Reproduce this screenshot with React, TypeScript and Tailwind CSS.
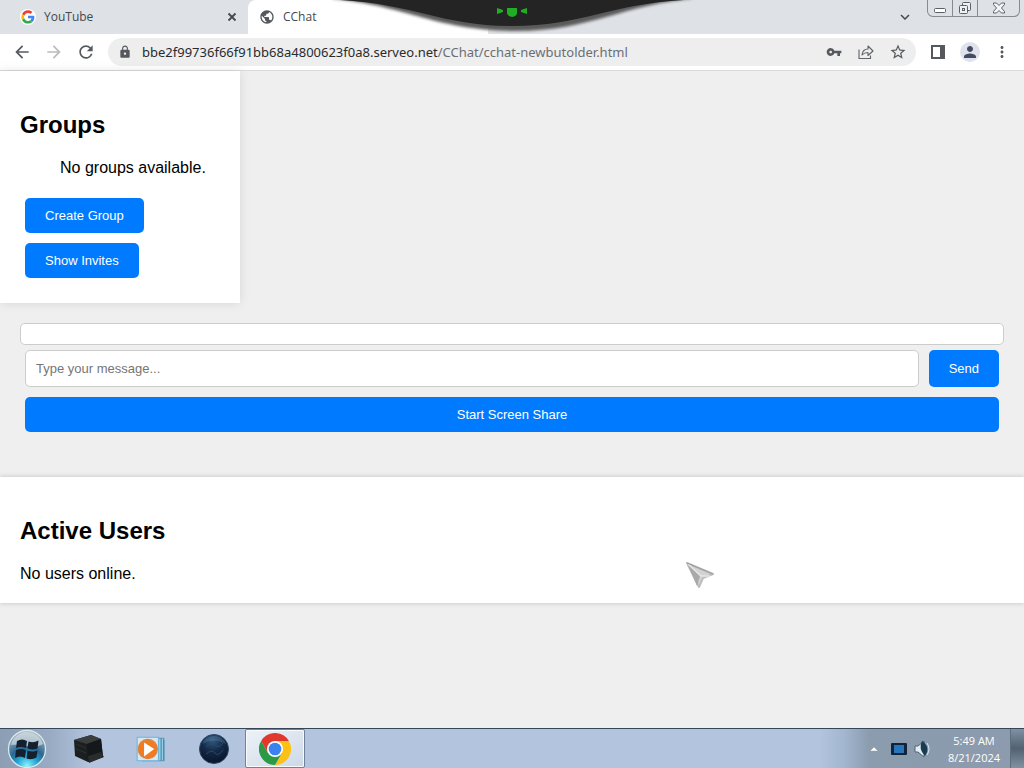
import type { ReactNode } from 'react';
import { MdArrowBack, MdArrowForward, MdRefresh, MdLock, MdVpnKey, MdStarBorder, MdPerson, MdMoreVert, MdKeyboardArrowDown, MdPublic } from 'react-icons/md';

function GoogleLogo() {
  return (
    <svg viewBox="0 0 48 48" className="size-4" aria-hidden="true">
      <circle cx="24" cy="24" r="24" fill="#fff" />
      <g transform="translate(4 4) scale(.83)">
        <path fill="#EA4335" d="M24 9.5c3.54 0 6.71 1.22 9.21 3.6l6.85-6.85C35.9 2.38 30.47 0 24 0 14.62 0 6.51 5.38 2.56 13.22l7.98 6.19C12.43 13.72 17.74 9.5 24 9.5z" />
        <path fill="#4285F4" d="M46.98 24.55c0-1.57-.15-3.09-.38-4.55H24v9.02h12.94c-.58 2.96-2.26 5.48-4.78 7.18l7.73 6c4.51-4.18 7.09-10.36 7.09-17.65z" />
        <path fill="#FBBC05" d="M10.53 28.59c-.48-1.45-.76-2.99-.76-4.59s.27-3.14.76-4.59l-7.98-6.19C.92 16.46 0 20.12 0 24c0 3.88.92 7.54 2.56 10.78l7.97-6.19z" />
        <path fill="#34A853" d="M24 48c6.48 0 11.93-2.13 15.89-5.81l-7.73-6c-2.15 1.45-4.92 2.3-8.16 2.3-6.26 0-11.57-4.22-13.47-9.91l-7.98 6.19C6.51 42.62 14.62 48 24 48z" />
      </g>
    </svg>
  );
}

function ChromeLogo() {
  return (
    <svg viewBox="0 0 48 48" className="size-8" aria-hidden="true">
      <path fill="#e0382c" d="M24 24 3.2 12A24 24 0 0 1 44.8 12z" />
      <path fill="#fbc116" d="M24 24V12h20.8A24 24 0 0 1 24 48l10.4-18z" />
      <path fill="#2b9a45" d="M24 24 13.6 30 3.2 12A24 24 0 0 0 24 48l10.4-18z" />
      <path fill="#e0382c" d="M3.2 12 13.6 30 24 24V12z" />
      <circle cx="24" cy="24" r="12" fill="#fff" />
      <circle cx="24" cy="24" r="9.5" fill="#3b82ee" />
    </svg>
  );
}

function StartOrb() {
  return (
    <svg viewBox="0 0 40 40" className="size-10" aria-hidden="true">
      <defs>
        <radialGradient id="orb" cx=".5" cy=".95" r=".9">
          <stop offset="0" stopColor="#8cf5f8" />
          <stop offset=".3" stopColor="#25a5d9" />
          <stop offset=".55" stopColor="#2a6791" />
          <stop offset="1" stopColor="#a9b6c0" />
        </radialGradient>
      </defs>
      <circle cx="20" cy="20" r="18.5" fill="url(#orb)" stroke="#d5eaed" strokeWidth="1.3" />
      <path d="M4 16a16.5 16.5 0 0 1 32-1c-10 6-22-1-32 1z" fill="#dbe4e8" opacity=".65" />
      <g fill="#14202d">
        <path d="M10 12q5-3 10 0l-1 7q-5-2-10 0z" />
        <path d="M21.500 12.500q5 2 10-1l-1 8q-5 2-10 0z" />
        <path d="M9 21q5-2 10 0l-1 8q-5-3-10 0z" />
        <path d="M20.500 21.500q5 2 10 0l-1 7q-5 3-10 1z" />
      </g>
    </svg>
  );
}

function BoxIcon() {
  return (
    <svg viewBox="0 0 32 30" className="h-8 w-8" aria-hidden="true">
      <path d="M1 6 18 1l10 4 2 18-15 5L2 22z" fill="#1c1f20" />
      <path d="M1 6 18 1l10 4-14 5z" fill="#3b3e3e" />
      <path d="m14 10 14-5 2 18-15 5z" fill="#15181a" />
      <path d="m3 10 10 4m-10 1 10 4" stroke="#2c3031" />
      <path d="m15 22 13-4 3 5-15 6z" fill="#292c2d" />
    </svg>
  );
}

function MediaIcon() {
  return (
    <svg viewBox="0 0 30 26" className="h-7 w-8" aria-hidden="true">
      <path d="M7 3h20v21H7z" fill="#9acbe5" stroke="#6697b4" />
      <path d="M24.500 3v21m2.500-20v20" stroke="#2f8db0" />
      <path d="M2 2h20v22H2z" fill="#d8e6ee" stroke="#72b3dc" />
      <circle cx="12" cy="13" r="9" fill="#ef7c20" stroke="#d8833c" />
      <path d="m8.500 7 9.500 6-9.500 7z" fill="#fff" />
    </svg>
  );
}

function GlobeIcon() {
  return (
    <svg viewBox="0 0 32 32" className="size-8" aria-hidden="true">
      <defs>
        <radialGradient id="planet" cx=".45" cy=".2" r=".85">
          <stop offset="0" stopColor="#315a80" />
          <stop offset=".45" stopColor="#142a48" />
          <stop offset="1" stopColor="#071225" />
        </radialGradient>
      </defs>
      <circle cx="16" cy="16" r="14.500" fill="url(#planet)" stroke="#29496b" />
      <path d="M8 14q5-6 9-2t8-2M8 21q6-5 9-1t8-3" fill="none" stroke="#2c4866" strokeWidth="1" />
      <path d="M4 11a13 13 0 0 1 24 0q-12-7-24 0z" fill="#6790b3" opacity=".3" />
    </svg>
  );
}

function ShareIcon() {
  return (
    <svg viewBox="0 0 16 16" className="size-4" fill="none" stroke="#5f6368" strokeWidth="1.100" aria-hidden="true">
      <path d="M1 5.500V14.500h11.500v-3" />
      <path d="M4 11c.5-4 2.500-6 6-6V2l5 5-5 4.500V8.500c-3 0-4.500.8-6 2.500z" strokeLinejoin="round" />
    </svg>
  );
}

function TopDrawer() {
  return (
    <svg viewBox="0 0 360 36" className="pointer-events-none absolute left-1/2 top-0 h-9 w-90 -translate-x-1/2" aria-hidden="true">
      <defs>
        <filter id="soft" x="-5%" y="-20%" width="110%" height="150%">
          <feGaussianBlur stdDeviation="1.800" />
        </filter>
        <clipPath id="strip"><path d="M0 0h360v34H0z" /></clipPath>
      </defs>
      <g clipPath="url(#strip)">
        <path d="M-10-2C70 3 100 30 180 31S290 3 370-2z" fill="#5a5a5a" filter="url(#soft)" />
        <path d="M8 0C82 4 110 26 180 26S278 4 352 0z" fill="#242424" />
      </g>
      <path d="M165 8l6 2v2l-6 2zm30 0-6 2v2l6 2zM175 8h10v5q0 3-5 4-5-1-5-4z" fill="#20ae25" />
    </svg>
  );
}

function IconButton({ label, children, className = '' }: { label: string; children: ReactNode; className?: string }) {
  return (
    <button type="button" aria-label={label} className={`flex shrink-0 items-center justify-center ${className}`}>
      {children}
    </button>
  );
}

function TabStrip() {
  return (
    <header className="relative flex h-[34px] bg-[#dee2e6] text-xs text-[#45494d]">
      <div className="flex w-62 items-center gap-2 rounded-br-lg pl-5 pr-2">
        <GoogleLogo />
        <span className="flex-1">YouTube</span>
        <IconButton label="Close tab" className="size-4">
          <svg viewBox="0 0 16 16" className="size-4" aria-hidden="true"><path d="m4.500 4.500 7 7m0-7-7 7" stroke="currentColor" strokeWidth="1.800" /></svg>
        </IconButton>
      </div>
      <div className="flex w-60 items-center gap-2 rounded-t-lg bg-white pl-[11px]">
        <MdPublic size={16} color="#54585c" />
        <span>CChat</span>
      </div>
      <div className="flex flex-1 items-start justify-end pr-1">
        <IconButton label="Search tabs" className="mr-3 mt-[7px] size-5"><MdKeyboardArrowDown size={18} stroke="currentColor" strokeWidth={0} /></IconButton>
        <div className="flex h-[17px] rounded-b-md border border-t-0 border-[#858b90] text-[#5b6064]">
          <IconButton label="Minimize" className="w-6">
            <svg viewBox="0 0 14 12" className="h-3 w-3.5" fill="#fff" stroke="currentColor" aria-hidden="true"><rect x="1.500" y="6.500" width="11" height="4" rx="1" /></svg>
          </IconButton>
          <IconButton label="Restore" className="w-[26px] border-x border-[#858b90]">
            <svg viewBox="0 0 14 14" className="size-3.5" fill="#eef0f2" stroke="currentColor" aria-hidden="true"><rect x="4.500" y="1.500" width="8" height="8" rx="1" /><rect x="1.500" y="4.500" width="8" height="8" rx="1" /><rect x="4.500" y="7.500" width="2" height="2" /></svg>
          </IconButton>
          <IconButton label="Close" className="w-[41px]">
            <svg viewBox="0 0 14 14" className="size-3.5" fill="#f5f6f7" stroke="currentColor" aria-hidden="true"><path d="M1.500 2h3L7 4.500 9.500 2h3v1.500L9.500 7l3 3.500V12h-3L7 9.500 4.500 12h-3v-1.500l3-3.500-3-3.500z" /></svg>
          </IconButton>
        </div>
      </div>
      <TopDrawer />
    </header>
  );
}

function AddressBar() {
  return (
    <div className="flex h-[37px] items-center border-b border-[#d9dadb] bg-white pl-3 pr-3 text-[#55595d]">
      <nav className="flex gap-3" aria-label="History">
        <IconButton label="Back" className="size-5"><MdArrowBack size={20} /></IconButton>
        <IconButton label="Forward" className="size-5 text-[#babcbe]"><MdArrowForward size={20} /></IconButton>
        <IconButton label="Reload" className="size-5"><MdRefresh size={20} /></IconButton>
      </nav>
      <div className="ml-3 flex h-7 min-w-0 flex-1 items-center rounded-full bg-[#eeeeee] pl-2.5 pr-2.5">
        <MdLock size={14} className="shrink-0" />
        <div role="textbox" aria-label="Address" tabIndex={0} className="ml-2.5 min-w-0 flex-1 truncate font-['Noto_Sans','Open_Sans',sans-serif] text-[13px] leading-5 text-[#6b6f73]">
          <span className="text-[#292b2e]">bbe2f99736f66f91bb68a4800623f0a8.serveo.net</span>/CChat/cchat-newbutolder.html
        </div>
        <div className="flex gap-4">
          <IconButton label="Passwords" className="size-4"><MdVpnKey size={16} /></IconButton>
          <IconButton label="Share" className="size-4"><ShareIcon /></IconButton>
          <IconButton label="Bookmark" className="size-4"><MdStarBorder size={18} className="shrink-0" /></IconButton>
        </div>
      </div>
      <div className="ml-3 flex items-center gap-3">
        <IconButton label="Side panel" className="size-5">
          <svg viewBox="0 0 16 16" className="size-4" aria-hidden="true"><path fill="currentColor" d="M1 1h14v14H1zm2 2v10h7V3z" fillRule="evenodd" /></svg>
        </IconButton>
        <IconButton label="Profile" className="size-5 rounded-full bg-[#dfe2ec] text-[#444b61]"><MdPerson size={18} /></IconButton>
        <IconButton label="Menu" className="size-5"><MdMoreVert size={18} /></IconButton>
      </div>
    </div>
  );
}

function BlueButton({ children, className = '' }: { children: ReactNode; className?: string }) {
  return (
    <button type="button" className={`rounded-[5px] bg-[#007bff] px-5 py-2.5 text-[13px] leading-[15px] text-white ${className}`}>
      {children}
    </button>
  );
}

function ChatPage() {
  return (
    <main className="relative flex-1 bg-[#efefef] font-['Liberation_Sans',Arial,sans-serif] text-base leading-[18px] text-black">
      <aside className="w-60 bg-white p-5 shadow-[0_0_10px_rgba(0,0,0,0.1)]">
        <h2 className="my-5 text-2xl font-bold leading-7">Groups</h2>
        <p className="mb-4 pl-10">No groups available.</p>
        <div className="flex flex-col items-start gap-2.5 p-[5px]">
          <BlueButton>Create Group</BlueButton>
          <BlueButton>Show Invites</BlueButton>
        </div>
      </aside>
      <section className="p-5" aria-label="Chat">
        <div className="h-[22px] rounded-[5px] border border-[#cccccc] bg-white" role="log" />
        <form className="flex gap-2.5 p-[5px]" onSubmit={(e) => e.preventDefault()}>
          <input aria-label="Message" placeholder="Type your message..." className="h-[37px] min-w-0 flex-1 rounded-[5px] border border-[#cccccc] bg-white px-2.5 text-[13px] placeholder:text-[#757575]" />
          <BlueButton>Send</BlueButton>
        </form>
        <div className="flex p-[5px]"><BlueButton className="flex-1">Start Screen Share</BlueButton></div>
      </section>
      <section className="mt-5 bg-white p-5 shadow-[0_0_5px_rgba(0,0,0,0.2)]">
        <h2 className="my-5 text-2xl font-bold leading-7">Active Users</h2>
        <p>No users online.</p>
      </section>
      <svg viewBox="0 0 30 28" className="pointer-events-none absolute left-[685px] top-[490px] h-7 w-[30px]" aria-hidden="true">
        <path d="M2 2 28 13 18 17l-4 9z" fill="#d2d2d2" stroke="#bdbdbd" strokeWidth="2" strokeLinejoin="round" />
        <path d="m2 2 10 23 3-10z" fill="#a9a9a9" />
        <path d="m3 3 13 12h9" fill="none" stroke="#e6e6e6" strokeWidth="1.500" />
        <path d="m2 2 26 11" stroke="#999" />
      </svg>
    </main>
  );
}

function Taskbar() {
  return (
    <footer className="flex h-10 items-center border-t border-[#34465a] bg-[linear-gradient(90deg,#8c9eb4_0px,#99aac3_50px,#b2c4de_90px,#b2c4de_calc(100%-205px),#a3b6cf_calc(100%-180px),#8b9caf_calc(100%-155px),#8c9bad_100%)]">
      <IconButton label="Start" className="ml-[7px] size-10"><StartOrb /></IconButton>
      <IconButton label="Computer" className="ml-3 h-10 w-[60px]"><BoxIcon /></IconButton>
      <IconButton label="Media player" className="h-10 w-[64px]"><MediaIcon /></IconButton>
      <IconButton label="Browser" className="h-10 w-[62px]"><GlobeIcon /></IconButton>
      <IconButton label="Google Chrome" className="h-[39px] w-[60px] rounded-xs border border-[#6f829a] bg-gradient-to-br from-[#edf2f7] to-[#cdd9e9] shadow-[inset_0_0_0_1px_#f8fafc]"><ChromeLogo /></IconButton>
      <div className="ml-auto flex items-center self-stretch text-white">
        <IconButton label="Show hidden icons" className="size-4"><svg viewBox="0 0 8 4" className="h-1 w-2" aria-hidden="true"><path d="m0 4 4-4 4 4z" fill="#fff" stroke="#6b7681" strokeWidth=".3" /></svg></IconButton>
        <IconButton label="Display" className="ml-2 h-4 w-[18px]">
          <svg viewBox="0 0 18 14" className="h-3.5 w-[18px]" aria-hidden="true"><rect x="1" y="1" width="16" height="12" rx="1" fill="#122439" /><path d="M4 3h10v8H4z" fill="#2776bc" /></svg>
        </IconButton>
        <IconButton label="Volume" className="ml-1.5 size-4">
          <svg viewBox="0 0 18 18" className="size-[18px] shrink-0" aria-hidden="true"><path d="M2 6h3l6-5v16l-6-5H2z" fill="#e1edf2" stroke="#526371" /><path d="M9 1q9 6 3 15-7-7-3-15z" fill="#193c51" /><path d="M14 3q4 6 0 12" fill="none" stroke="#d8e8f0" /></svg>
        </IconButton>
        <time className="ml-3.5 w-[60px] text-center text-[11px] leading-[17px]">5:49 AM<br />8/21/2024</time>
        <button type="button" aria-label="Show desktop" className="ml-1.5 h-full w-3.5 border-l border-[#5f6e7e] bg-gradient-to-b from-[#7f91a4] via-[#526272] to-[#8292a2]" />
      </div>
    </footer>
  );
}

export default function App() {
  return (
    <div className="flex min-h-screen flex-col font-['Open_Sans','Noto_Sans',sans-serif]">
      <TabStrip />
      <AddressBar />
      <ChatPage />
      <Taskbar />
    </div>
  );
}
